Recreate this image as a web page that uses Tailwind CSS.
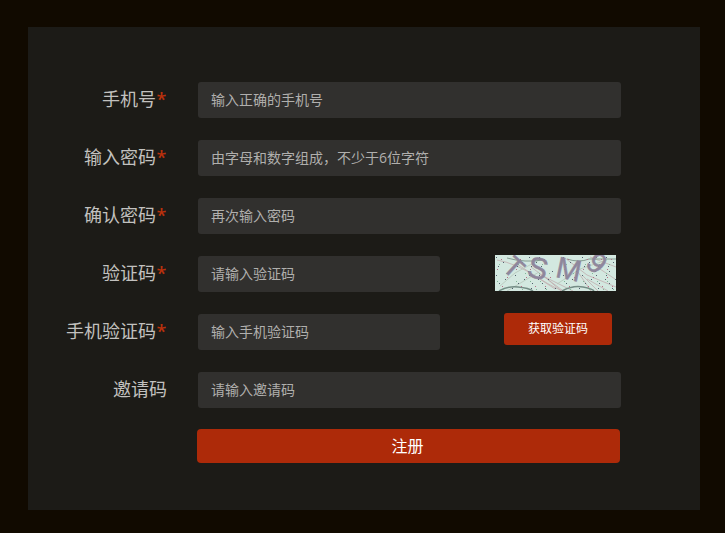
<!DOCTYPE html>
<html lang="zh-CN">
<head>
<meta charset="utf-8">
<title>注册</title>
<script src="https://cdn.jsdelivr.net/npm/@tailwindcss/browser@4"></script>
</head>
<body class="h-[533px] overflow-hidden bg-[#110a00] pt-[27px] pl-[28px] font-['Open_Sans','Noto_Sans_CJK_SC',sans-serif]">
<form class="flex h-[483px] w-[672px] flex-col gap-[22px] bg-[#1c1b17] pt-[55px] text-[#c2c1bf]">
  <div class="flex h-9 items-center">
    <label class="w-[139px] pb-0.5 text-right text-lg leading-[34px]">手机号<span class="inline-block w-[11px] text-center font-semibold text-[#b9310c]">*</span></label>
    <input class="ml-[31px] h-9 w-[423px] rounded-[3px] bg-[#31302e] px-[13px] pb-0.5 text-sm placeholder:text-[#b0afad]" placeholder="输入正确的手机号">
  </div>
  <div class="flex h-9 items-center">
    <label class="w-[139px] pb-0.5 text-right text-lg leading-[34px]">输入密码<span class="inline-block w-[11px] text-center font-semibold text-[#b9310c]">*</span></label>
    <input class="ml-[31px] h-9 w-[423px] rounded-[3px] bg-[#31302e] px-[13px] pb-0.5 text-sm placeholder:text-[#b0afad]" placeholder="由字母和数字组成，不少于6位字符">
  </div>
  <div class="flex h-9 items-center">
    <label class="w-[139px] pb-0.5 text-right text-lg leading-[34px]">确认密码<span class="inline-block w-[11px] text-center font-semibold text-[#b9310c]">*</span></label>
    <input class="ml-[31px] h-9 w-[423px] rounded-[3px] bg-[#31302e] px-[13px] pb-0.5 text-sm placeholder:text-[#b0afad]" placeholder="再次输入密码">
  </div>
  <div class="flex h-9 items-center">
    <label class="w-[139px] pb-0.5 text-right text-lg leading-[34px]">验证码<span class="inline-block w-[11px] text-center font-semibold text-[#b9310c]">*</span></label>
    <input class="ml-[31px] h-9 w-[242px] rounded-[3px] bg-[#31302e] px-[13px] pb-0.5 text-sm placeholder:text-[#b0afad]" placeholder="请输入验证码">
    <svg class="-mt-[2px] ml-[55px] h-9 w-[121px] bg-[#d3e8e0]" viewBox="0 0 121 36" fill="none">
      <g stroke="#b98f96" stroke-width=".8" opacity=".65">
        <path d="M2 5Q20 8 42 22T70 36M22 9L60 34M36 12L67 35M44 19L78 36M50 22L66 36M83 17L96 36M87 20L103 36M92 24L113 36M99 10L120 24M95 2L121 12M70 3L92 20L121 32"/>
        <path d="M5 31L20 18L46 4M12 36L44 17M62 29L85 14L112 5" stroke="#a6b5a6"/>
      </g>
      <g stroke="#748c85" stroke-width="1.5">
        <path d="M4 36Q12 31 23 32T38 36M67 36Q78 30 88 32T99 36"/>
        <path d="M12 3Q30 8 48 5M72 4Q84 8 94 4L121 4" stroke="#849c91" stroke-width="1"/>
      </g>
      <g stroke="#52606e" stroke-width="1" stroke-dasharray="1 18 1 13 1 9 1 23">
        <path d="M1 2.5H121M8 7.5H121M3 11.5H121M14 16.5H121M1 20.5H121M10 24.5H121M4 28.5H121M17 33.5H121"/>
        <path d="M6 4.5H121M2 14.5H121M12 22.5H121M7 31.5H121" stroke="#b66f86"/>
        <path d="M4 9.5H121M11 18.5H121M2 26.5H121M8 34.5H121" stroke="#82b898"/>
      </g>
      <g class="font-['Liberation_Sans',sans-serif]" fill="#8f879c" stroke="#8f879c" stroke-width=".5" text-anchor="middle">
        <text transform="translate(19 12) rotate(42)" y="10" font-size="28">T</text>
        <text transform="translate(43 13) rotate(14)" y="10.5" font-size="30">S</text>
        <text transform="translate(74 14) rotate(12)" y="10.5" font-size="30">M</text>
        <text transform="translate(102 8) rotate(42)" y="10" font-size="29">9</text>
      </g>
    </svg>
  </div>
  <div class="flex h-9 items-center">
    <label class="w-[139px] pb-0.5 text-right text-lg leading-[34px]">手机验证码<span class="inline-block w-[11px] text-center font-semibold text-[#b9310c]">*</span></label>
    <input class="ml-[31px] h-9 w-[242px] rounded-[3px] bg-[#31302e] px-[13px] pb-0.5 text-sm placeholder:text-[#b0afad]" placeholder="输入手机验证码">
    <button type="button" class="-mt-[6px] ml-[64px] h-8 w-[108px] rounded-[3px] bg-[#ad2a09] text-xs text-white">获取验证码</button>
  </div>
  <div class="flex h-9 items-center">
    <label class="w-[139px] pb-0.5 text-right text-lg leading-[34px]">邀请码</label>
    <input class="ml-[31px] h-9 w-[423px] rounded-[3px] bg-[#31302e] px-[13px] pb-0.5 text-sm placeholder:text-[#b0afad]" placeholder="请输入邀请码">
  </div>
  <button type="button" class="-mt-px ml-[169px] h-[34px] w-[423px] rounded-[4px] bg-[#ad2a09] pr-0.5 text-base text-white">注册</button>
</form>
</body>
</html>
